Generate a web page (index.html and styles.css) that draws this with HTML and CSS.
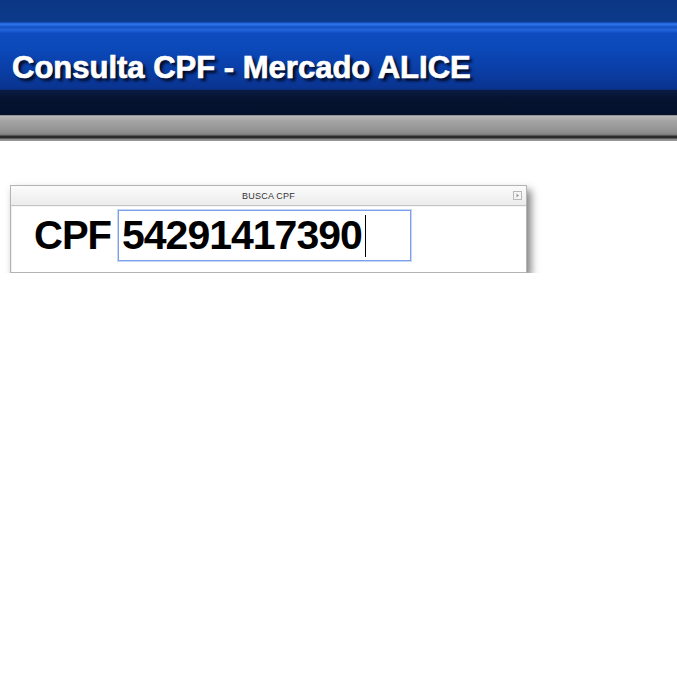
FILE: index.html
```html
<!DOCTYPE html>
<html lang="pt">
<head>
<meta charset="utf-8">
<title>Consulta CPF - Mercado ALICE</title>
<link rel="stylesheet" href="styles.css">
</head>
<body>
<header class="banner">
  <div class="banner-blue">
    <h1 class="banner-title">Consulta CPF - Mercado ALICE</h1>
  </div>
  <div class="banner-dark"></div>
  <div class="banner-metal"></div>
</header>
<main class="content">
  <section class="panel">
    <div class="panel-head">
      <span class="panel-title">BUSCA CPF</span>
      <span class="panel-tool"><svg width="9" height="9" viewBox="0 0 9 9"><rect x="0.5" y="0.5" width="8" height="8" fill="#f4f4f4" stroke="#b8b8b8"/><path d="M3.5 2.5 L6 4.5 L3.5 6.5 Z" fill="#9a9a9a"/></svg></span>
    </div>
    <div class="panel-body">
      <label class="cpf-label" for="cpf">CPF</label>
      <div class="cpf-input" id="cpf"><span class="cpf-value">54291417390</span><span class="caret"></span></div>
    </div>
  </section>
</main>
</body>
</html>
```

FILE: styles.css
```css
html, body {
  margin: 0;
  padding: 0;
  background: #ffffff;
}
body {
  font-family: "Liberation Sans", Arial, sans-serif;
}
.banner {
  display: flex;
  flex-direction: column;
}
.banner-blue {
  height: 90px;
  background:
    linear-gradient(to bottom,
      #0b3684 0px, #0c3a8c 22px,
      #2266dc 23px, #2e74ee 25px,
      #1a58cc 26px, #1552c4 28px,
      #2264dc 29px, #1e5ed6 31px,
      #0d4cc0 33px, #0b48b8 50px,
      #0a3ea6 70px, #0a3490 88px, #092c7a 90px);
  display: flex;
  align-items: flex-start;
}
.banner-title {
  margin: 52px 0 0 12px;
  font-size: 31px;
  line-height: 31px;
  font-weight: bold;
  color: #ffffff;
  -webkit-text-stroke: 0.7px #ffffff;
  text-shadow: 3px 3px 3px rgba(0, 0, 10, 0.85);
  letter-spacing: 0;
}
.banner-dark {
  height: 25px;
  background: linear-gradient(to bottom, #0a1c44 0px, #061432 8px, #04102a 25px);
}
.banner-metal {
  height: 26px;
  background: linear-gradient(to bottom,
    #6c6c6c 0px, #b8b8b8 1px, #a4a4a4 6px, #9a9a9a 12px,
    #8c8c8c 18px, #7a7a7a 20px, #2e2e2e 21px, #2a2a2a 23px,
    #8a8a8a 24px, #999999 26px);
}
.content {
  padding: 44px 0 0 10px;
}
.panel {
  width: 515px;
  border: 1px solid #b4b4b4;
  background: #ffffff;
  box-shadow: 4px 5px 8px rgba(0, 0, 0, 0.5);
}
.panel-head {
  height: 19px;
  background: linear-gradient(to bottom, #fbfbfb, #ececec);
  border-bottom: 1px solid #c4c4c4;
  display: flex;
  align-items: center;
  justify-content: center;
  position: relative;
}
.panel-title {
  font-size: 9px;
  color: #333333;
  letter-spacing: 0.2px;
}
.panel-tool {
  position: absolute;
  right: 4px;
  top: 5px;
  display: flex;
}
.panel-body {
  height: 66px;
  padding: 3px 0 0 22px;
  box-sizing: border-box;
  display: flex;
  align-items: flex-start;
  gap: 8px;
  border-top: 1px solid #f4f4f4;
  border-left: 1px solid #f0f0f0;
}
.cpf-label {
  font-size: 40px;
  font-weight: bold;
  color: #000000;
  line-height: 51px;
  letter-spacing: -1px;
  width: 76px;
  white-space: nowrap;
}
.cpf-input {
  width: 288px;
  height: 49px;
  border: 1px solid #7d9ee8;
  box-shadow: 0 0 0 1px #c6d6f6;
  display: flex;
  align-items: center;
  padding-left: 3px;
}
.cpf-value {
  font-size: 41px;
  font-weight: bold;
  color: #000000;
  line-height: 49px;
  letter-spacing: -1px;
}
.caret {
  width: 1px;
  height: 42px;
  background: #000000;
  margin-left: 3px;
}
```
